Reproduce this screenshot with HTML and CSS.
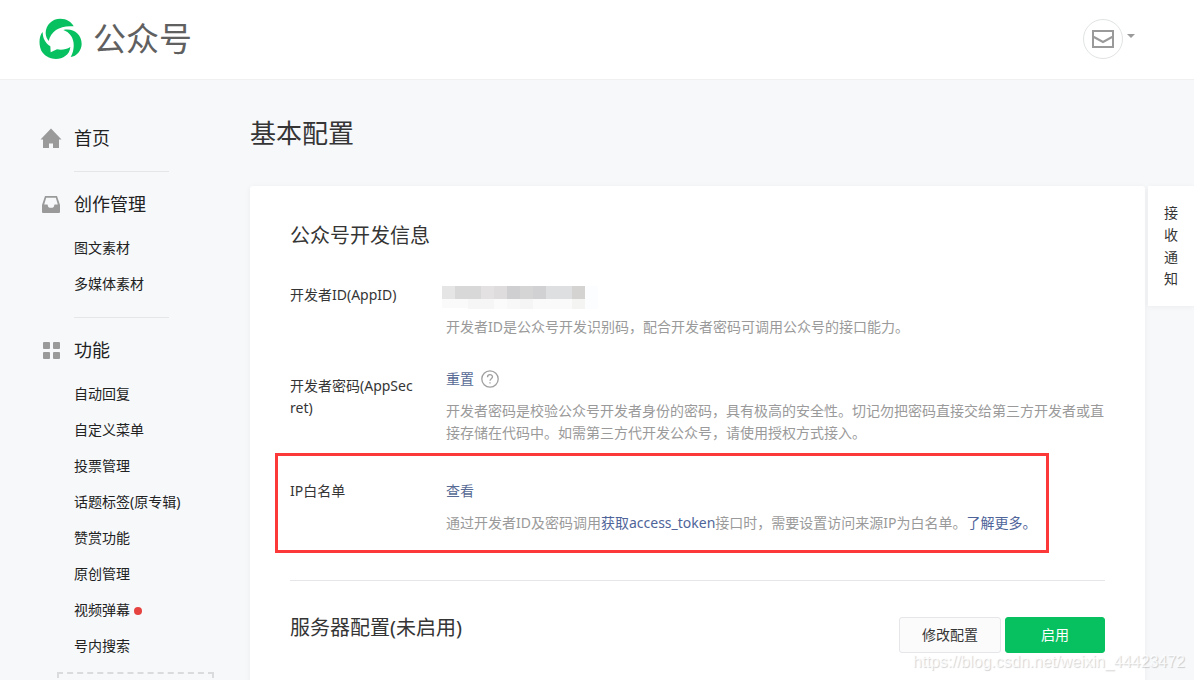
FILE: index.html
```html
<!DOCTYPE html>
<html lang="zh-CN">
<head>
<meta charset="utf-8">
<title>公众号 - 基本配置</title>
<link rel="stylesheet" href="styles.css">
</head>
<body>
<div class="page">
  <header class="header">
    <a class="logo" href="#">
      <svg class="logo-mark" viewBox="58 55 129 126" aria-hidden="true">
        <path d="M87 124C82 118 78 109 78 100C78 76 97 57 122 57C141 57 156 67 162 80C124 76 94 92 87 124Z"/>
        <path d="M131 91C160 84 186 104 186 132C186 152 171 170 153 172C168 148 168 104 131 91Z"/>
        <path d="M69 97C57 108 56 142 68 158C91 190 149 182 152 142C140 150 125 151 112 149L93 158L92 140C76 130 69 114 69 97Z"/>
      </svg>
      <span class="logo-text">公众号</span>
    </a>
    <button class="account" type="button" aria-label="消息">
      <span class="avatar">
        <svg width="22" height="18" viewBox="0 0 22 18" fill="none" stroke="#9a9a9a" stroke-width="2" aria-hidden="true">
          <path d="M1 1H21V17H1ZM1 6.500L11 12L21 6.500"/>
        </svg>
      </span>
      <span class="caret"></span>
    </button>
  </header>
  <div class="body">
    <nav class="sidebar">
      <section class="group">
        <a class="heading" href="#">
          <svg class="icon" viewBox="0 0 22 22" aria-hidden="true"><path d="M11 1.500L21.500 12.500H19V21H13V16.500H9V21H3V12.500H.5Z"/></svg>首页
        </a>
      </section>
      <section class="group">
        <a class="heading" href="#">
          <svg class="icon" viewBox="0 0 22 22" aria-hidden="true"><path fill-rule="evenodd" d="M5 3H17L20 12V19Q20 20 19 20H3Q2 20 2 19V12ZM6.200 4.700L4.200 11.500H7.500Q8 14.700 9.500 14.700H12.500Q14 14.700 14.500 11.500H17.800L15.800 4.700Z"/></svg>创作管理
        </a>
        <ul class="items">
          <li><a href="#">图文素材</a></li>
          <li><a href="#">多媒体素材</a></li>
        </ul>
      </section>
      <section class="group">
        <a class="heading" href="#">
          <svg class="icon" viewBox="0 0 22 22" aria-hidden="true"><rect x="3" y="3" width="7" height="7" rx="1"/><rect x="13" y="3" width="7" height="7" rx="1"/><rect x="3" y="13" width="7" height="7" rx="1"/><rect x="13" y="13" width="7" height="7" rx="1"/></svg>功能
        </a>
        <ul class="items">
          <li><a href="#">自动回复</a></li>
          <li><a href="#">自定义菜单</a></li>
          <li><a href="#">投票管理</a></li>
          <li><a href="#">话题标签(原专辑)</a></li>
          <li><a href="#">赞赏功能</a></li>
          <li><a href="#">原创管理</a></li>
          <li><a href="#">视频弹幕<span class="dot"></span></a></li>
          <li><a href="#">号内搜索</a></li>
        </ul>
      </section>
      <div class="add-box"></div>
    </nav>
    <main class="main">
      <h1 class="title">基本配置</h1>
      <div class="columns">
        <div class="card">
          <section class="info">
            <h2 class="subtitle">公众号开发信息</h2>
            <div class="row">
              <div class="label">开发者ID(AppID)</div>
              <div class="field">
                <div class="value value-masked">
                  <svg class="masked" width="156" height="23" viewBox="0 0 156 23" shape-rendering="crispEdges" aria-hidden="true">
                    <path fill="#e5e5e5" d="M0 0h13v13H0z"/><path fill="#d8d8d9" d="M13 0h26v13H13z"/><path fill="#e3e1e2" d="M39 0h13v13H39z"/><path fill="#dedcdd" d="M52 0h13v13H52z"/><path fill="#cfcfd1" d="M65 0h13v13H65z"/><path fill="#d5d5d5" d="M78 0h13v13H78z"/><path fill="#d1d1d3" d="M91 0h13v13H91z"/><path fill="#dddfe0" d="M104 0h26v13H104z"/><path fill="#d5d3d2" d="M130 0h13v13H130z"/><path fill="#fcfdff" d="M143 0h13v23H143z"/>
                    <path fill="#fafafa" d="M0 13h26v9H0z"/><path fill="#f6f6f7" d="M26 13h26v10H26z"/><path fill="#fbfbfb" d="M52 13h13v10H52z"/><path fill="#f8f8f8" d="M65 13h13v10H65z"/><path fill="#f5f5f5" d="M78 13h13v10H78z"/><path fill="#fafafa" d="M91 13h39v10H91z"/><path fill="#f4f4f2" d="M130 13h13v10H130z"/>
                  </svg>
                </div>
                <p class="hint">开发者ID是公众号开发识别码，配合开发者密码可调用公众号的接口能力。</p>
              </div>
            </div>
            <div class="row">
              <div class="label label-tall">开发者密码(AppSecret)</div>
              <div class="field">
                <div class="value">
                  <a class="link" href="#">重置</a>
                  <svg class="help" width="18" height="18" viewBox="0 0 18 18" fill="none" stroke="#a0a0a0" aria-hidden="true">
                    <circle cx="9" cy="9" r="8.200" stroke-width="1.300"/><path stroke-width="1.300" d="M6.500 7.200C6.500 3.700 11.500 3.900 11.500 6.800C11.500 8.600 9 8.700 9 10.800M9 12.200V13.600"/>
                  </svg>
                </div>
                <p class="hint">开发者密码是校验公众号开发者身份的密码，具有极高的安全性。切记勿把密码直接交给第三方开发者或直接存储在代码中。如需第三方代开发公众号，请使用授权方式接入。</p>
              </div>
            </div>
            <div class="row row-marked">
              <div class="label">IP白名单</div>
              <div class="field">
                <div class="value"><a class="link" href="#">查看</a></div>
                <p class="hint">通过开发者ID及密码调用<a class="link-strong" href="#">获取access_token</a>接口时，需要设置访问来源IP为白名单。<a class="link-strong" href="#">了解更多。</a></p>
              </div>
              <div class="mark"></div>
            </div>
          </section>
          <section class="server">
            <h2 class="subtitle">服务器配置(未启用)</h2>
            <div class="actions">
              <button class="btn" type="button">修改配置</button>
              <button class="btn btn-primary" type="button">启用</button>
            </div>
          </section>
        </div>
        <a class="notice" href="#">接收通知</a>
      </div>
    </main>
  </div>
  <div class="watermark">https://blog.csdn.net/weixin_44423472</div>
</div>
</body>
</html>
```
FILE: styles.css
```css
* {
  box-sizing: border-box;
}

body {
  margin: 0;
  font: 14px/22px "Noto Sans", "Noto Sans CJK SC", sans-serif;
  color: #353535;
  background: #f6f8fa;
}

h1, h2, p, ul {
  margin: 0;
  padding: 0;
  font-weight: 400;
}

a {
  color: inherit;
  text-decoration: none;
}

button {
  font: inherit;
  color: inherit;
  cursor: pointer;
}

.page {
  position: relative;
  height: 100vh;
  overflow: hidden;
}

.header {
  display: flex;
  align-items: center;
  justify-content: space-between;
  height: 80px;
  padding: 0 59px 2px 39px;
  background: #fff;
  border-bottom: 1px solid #eff0f2;
}

.logo {
  display: flex;
  align-items: center;
  gap: 11px;
}

.logo-mark {
  width: 43px;
  height: 42px;
  fill: #07c160;
}

.logo-text {
  font-size: 33px;
  line-height: 40px;
  color: #606060;
}

.account {
  display: flex;
  align-items: center;
  gap: 4px;
  padding: 0;
  border: 0;
  background: none;
}

.avatar {
  display: flex;
  align-items: center;
  justify-content: center;
  width: 40px;
  height: 40px;
  border: 1px solid #e1e3e3;
  border-radius: 50%;
}

.caret {
  margin-bottom: 6px;
  border: 4px solid transparent;
  border-top-color: #9a9a9a;
  border-bottom: 0;
}

.body {
  display: flex;
}

.sidebar {
  flex: none;
  width: 250px;
  padding: 40px 36px 0 40px;
  color: #222;
}

.group + .group {
  margin-top: 15px;
}

.group + .group::before {
  content: "";
  display: block;
  width: 95px;
  height: 1px;
  margin: 0 0 14px 34px;
  background: #e4e6e9;
}

.heading {
  display: flex;
  align-items: center;
  gap: 12px;
  height: 36px;
  font-size: 18px;
}

.icon {
  width: 22px;
  height: 22px;
  fill: #9a9a9a;
}

.items {
  padding: 8px 0 0 34px;
  list-style: none;
  line-height: 36px;
}

.dot {
  display: inline-block;
  width: 8px;
  height: 8px;
  margin-left: 4px;
  border-radius: 50%;
  background: #e64340;
}

.add-box {
  height: 40px;
  margin: 8px 0 0 17px;
  border: 2px dashed #dadbdd;
}

.main {
  flex: 1;
  min-width: 0;
  padding-top: 35px;
}

.title {
  margin-bottom: 35px;
  font-size: 26px;
  line-height: 36px;
}

.columns {
  display: flex;
  align-items: flex-start;
  gap: 3px;
}

.card {
  flex: 1;
  min-width: 0;
  padding: 35px 40px 60px;
  background: #fff;
  border-radius: 3px;
  box-shadow: 0 1px 6px rgba(0, 0, 0, 0.05);
}

.subtitle {
  font-size: 20px;
  line-height: 30px;
}

.info {
  display: flex;
  flex-direction: column;
  gap: 30px;
  padding-bottom: 46px;
  border-bottom: 1px solid #e4e6e9;
}

.info .subtitle {
  margin-bottom: 3px;
}

.row {
  display: flex;
  gap: 30px;
}

.row-marked {
  position: relative;
  margin-top: 6px;
}

.mark {
  position: absolute;
  inset: -27px 56px -19px -15px;
  border: 3px solid #fd3838;
  pointer-events: none;
}

.label {
  flex: none;
  width: 126px;
  word-break: break-all;
}

.label-tall {
  padding-top: 7px;
}

.field {
  flex: 1;
  min-width: 0;
}

.value {
  display: flex;
  align-items: center;
  gap: 7px;
  height: 22px;
  margin-bottom: 10px;
}

.value-masked {
  height: 26px;
  margin: 0 0 6px -4px;
}

.hint {
  color: #9a9a9a;
}

.link {
  color: #576b95;
}

.link-strong {
  color: #4f659a;
}

.server {
  display: flex;
  justify-content: space-between;
  padding-top: 32px;
}

.actions {
  display: flex;
  gap: 4px;
  padding-top: 4px;
}

.btn {
  min-width: 100px;
  height: 36px;
  padding: 0 22px;
  background: #fbfbfb;
  border: 1px solid #e4e6e9;
  border-radius: 3px;
}

.btn-primary {
  color: #fff;
  background: #07c160;
  border-color: #07c160;
}

.notice {
  flex: none;
  width: 46px;
  padding: 16px;
  background: #fff;
  box-shadow: 0 1px 6px rgba(0, 0, 0, 0.05);
}

.watermark {
  position: absolute;
  right: 9px;
  bottom: 7px;
  font: 16px/22px "Liberation Sans", sans-serif;
  color: rgba(255, 255, 255, 0.8);
  text-shadow: 1px 1px 1px rgba(0, 0, 0, 0.18);
}
```
